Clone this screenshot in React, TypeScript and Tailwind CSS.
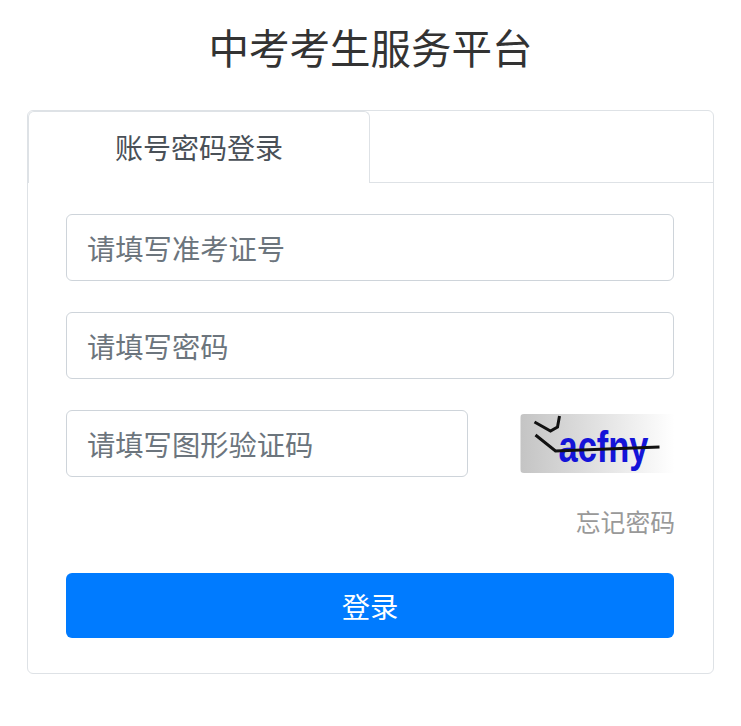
export default function App() {
  return (
    <div
      className="h-[726px] w-[741px] bg-white px-[27px] pt-[19px] text-[#333]"
      style={{ fontFamily: '"Noto Sans CJK SC", "Liberation Sans", sans-serif' }}
    >
      <h1 className="h-[56px] text-center text-[40.5px] leading-[56px] font-normal">中考考生服务平台</h1>
      <div className="mt-[35px] w-[687px] rounded-[6px] border border-[#dee2e6]">
        <div className="flex h-[72px] border-b border-[#dee2e6]">
          <div className="-mb-px h-[72px] w-[342px] rounded-t-[6px] border border-b-0 border-[#dee2e6] bg-white text-center text-[28px] leading-[70px] text-[#495057]">
            账号密码登录
          </div>
        </div>
        <div className="px-[38px] pt-[31px] pb-[35px]">
          <input
            readOnly
            placeholder="请填写准考证号"
            className="block h-[67px] w-[608px] rounded-[6px] border border-[#ced4da] px-[20px] text-[28.3px] placeholder:text-[#6c757d]"
          />
          <input
            readOnly
            placeholder="请填写密码"
            className="mt-[31px] block h-[67px] w-[608px] rounded-[6px] border border-[#ced4da] px-[20px] text-[28.3px] placeholder:text-[#6c757d]"
          />
          <div className="mt-[31px] flex items-start justify-between">
            <input
              readOnly
              placeholder="请填写图形验证码"
              className="block h-[67px] w-[402px] rounded-[6px] border border-[#ced4da] px-[20px] text-[28.3px] placeholder:text-[#6c757d]"
            />
            <svg width="155" height="59" viewBox="0 0 154 59" className="mt-[4px] rounded-[4px]">
              <defs>
                <linearGradient id="captchaBg" x1="0" x2="1" y1="0" y2="0">
                  <stop offset="0" stopColor="#c4c4c4" />
                  <stop offset="1" stopColor="#ffffff" />
                </linearGradient>
              </defs>
              <rect width="154" height="59" fill="url(#captchaBg)" />
              <text
                x="38"
                y="48"
                fontSize="44"
                fontWeight="bold"
                fill="#1414d8"
                textLength="90"
                lengthAdjust="spacingAndGlyphs"
                style={{ fontFamily: '"Liberation Sans", sans-serif' }}
              >
                acfny
              </text>
              <path d="M14 8 L30 17 L37 13 L39 2" stroke="#111" strokeWidth="3" fill="none" />
              <path d="M15 21 L35 37 L139 33" stroke="#111" strokeWidth="3" fill="none" />
            </svg>
          </div>
          <div className="mt-[24px] text-right text-[24.8px] leading-[40px] text-[#999]">忘记密码</div>
          <button className="mt-[32px] block h-[65px] w-[608px] rounded-[6px] bg-[#007bff] pt-[2px] text-[28.3px] text-white">
            登录
          </button>
        </div>
      </div>
    </div>
  );
}
